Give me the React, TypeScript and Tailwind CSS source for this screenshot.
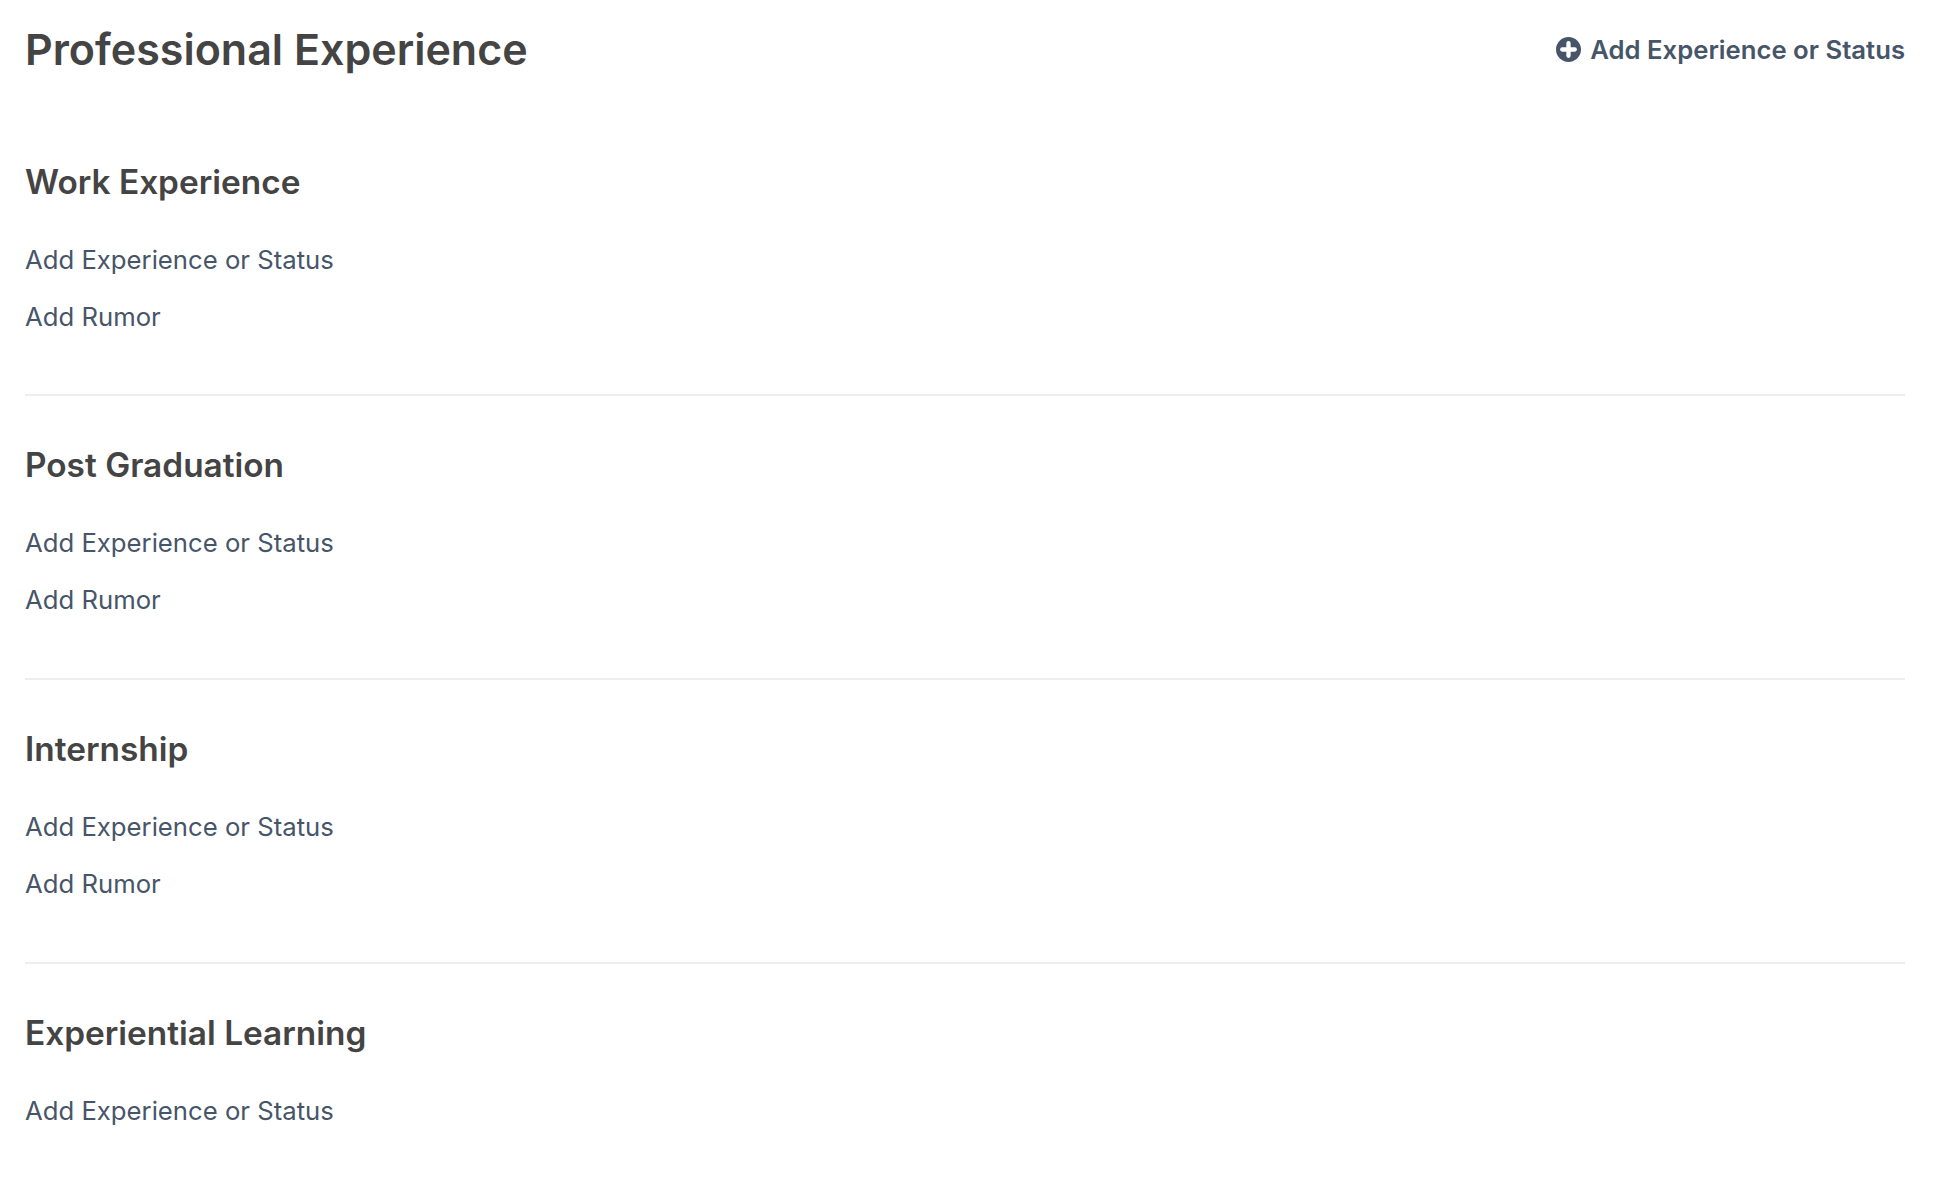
import { Fragment } from 'react';

const sections = [
  { title: 'Work Experience', rumor: true },
  { title: 'Post Graduation', rumor: true },
  { title: 'Internship', rumor: true },
  { title: 'Experiential Learning', rumor: false },
];

function PlusCircle() {
  return (
    <svg viewBox="0 0 26 26" className="w-[25px] h-[25px] shrink-0">
      <circle cx="13" cy="13" r="13" fill="#475569" />
      <path d="M13 6.5v13M6.5 13h13" stroke="#fff" strokeWidth="4.5" strokeLinecap="round" />
    </svg>
  );
}

export default function App() {
  return (
    <div className="min-h-[1188px] bg-white pl-[25px] pr-[37px] font-['Inter',sans-serif]">
      <div className="flex items-center justify-between h-[100px]">
        <h1 className="text-[43px] font-semibold text-[#444444] -mt-[2px]">Professional Experience</h1>
        <a className="flex items-center gap-[9px] text-[25.7px] font-semibold text-[#475569]">
          <PlusCircle />
          Add Experience or Status
        </a>
      </div>
      {sections.map((s, i) => (
        <Fragment key={s.title}>
          {i > 0 && <div className="h-[2px] bg-[#eeeeee]" />}
          <section className={i === 0 ? 'pt-[59px] pb-[57px]' : 'pt-[46px] pb-[58px]'}>
            <h2 className="text-[33.4px] leading-[46px] font-semibold text-[#444444]">{s.title}</h2>
            <div className="mt-[35px] text-[25.7px] leading-[40px] text-[#475569]">Add Experience or Status</div>
            {s.rumor && <div className="mt-[17px] text-[25.7px] leading-[40px] text-[#475569]">Add Rumor</div>}
          </section>
        </Fragment>
      ))}
    </div>
  );
}
